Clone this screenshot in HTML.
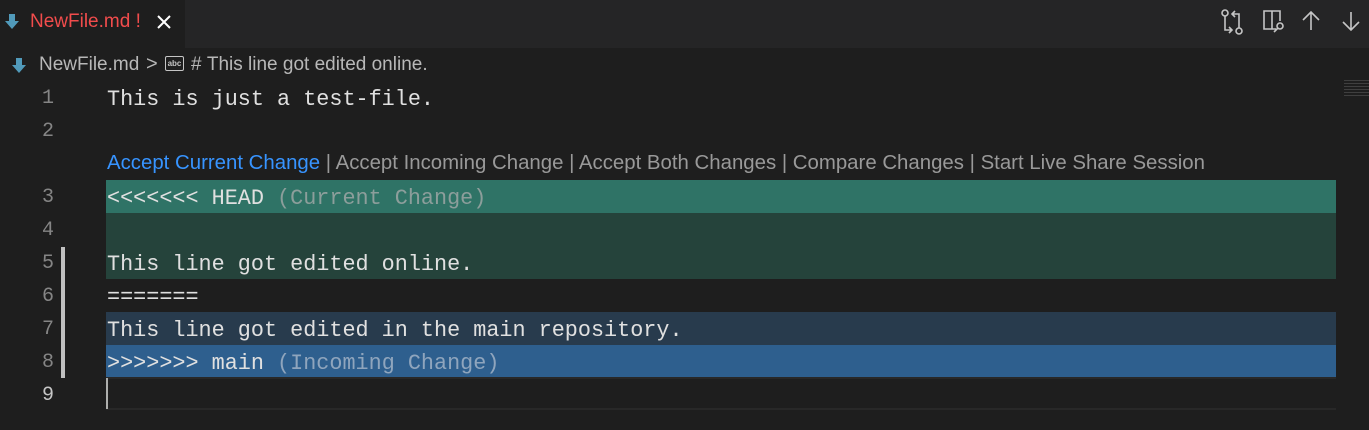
<!DOCTYPE html>
<html><head><style>
body{margin:0;width:1369px;height:430px;background:#1e1e1e;position:relative;overflow:hidden;font-family:"Liberation Sans",sans-serif}
.tabbar{position:absolute;left:0;top:0;width:1369px;height:48px;background:#252526}
.tab{position:absolute;left:0;top:0;width:185px;height:48px;background:#1e1e1e}
.abs{position:absolute}
.ln{position:absolute;left:0;width:54px;text-align:right;font-family:"Liberation Mono",monospace;font-size:20px;color:#858585;height:33px;line-height:33px;margin-top:1px}
.code{position:absolute;left:107px;font-family:"Liberation Mono",monospace;font-size:21.8px;color:#e0e0e0;height:33px;line-height:33px;white-space:pre;margin-top:2px}
.hl{position:absolute;left:106px;width:1230px}
.dim{color:#8c9e9b}
</style></head><body>
<div class="tabbar"><div class="tab"></div></div>
<svg class="abs" style="left:3px;top:12px" width="18" height="20" viewBox="0 0 18 20"><path d="M6 2h6v7h4l-7 8-7-8h4z" fill="#519aba"/></svg>
<div class="abs" style="left:30px;top:11px;font-size:19px;color:#f14c4c">NewFile.md !</div>
<svg class="abs" style="left:155px;top:13px" width="18" height="18" viewBox="0 0 18 18"><path d="M3 3l12 12M15 3L3 15" stroke="#fff" stroke-width="2"/></svg>
<svg class="abs" style="left:1220px;top:8px" width="26" height="28" viewBox="0 0 26 28" fill="none" stroke="#c5c5c5" stroke-width="1.6"><circle cx="5" cy="5" r="3"/><circle cx="19" cy="23" r="3"/><path d="M5 8v14h6M9 19l3 3-3 3M19 20V6h-6M15 3l-3 3 3 3"/></svg>
<svg class="abs" style="left:1260px;top:8px" width="26" height="26" viewBox="0 0 26 26" fill="none" stroke="#c5c5c5" stroke-width="1.6"><path d="M16 21H4V3h16v10M12 3v18"/><circle cx="20" cy="18" r="3"/><path d="M18 20l-4 4"/></svg>
<svg class="abs" style="left:1300px;top:9px" width="22" height="24" viewBox="0 0 22 24" fill="none" stroke="#c5c5c5" stroke-width="1.6"><path d="M11 21V3M3 11l8-8 8 8"/></svg>
<svg class="abs" style="left:1340px;top:9px" width="22" height="24" viewBox="0 0 22 24" fill="none" stroke="#c5c5c5" stroke-width="1.6"><path d="M11 3v18M3 13l8 8 8-8"/></svg>
<svg class="abs" style="left:10px;top:56px" width="18" height="20" viewBox="0 0 18 20"><path d="M6 2h6v7h4l-7 8-7-8h4z" fill="#519aba"/></svg>
<div class="abs" style="left:39px;top:54px;font-size:19px;color:#b8b8b8;white-space:pre">NewFile.md</div>
<div class="abs" style="left:146px;top:53px;font-size:20px;color:#b8b8b8">&gt;</div>
<div class="abs" style="left:165px;top:56px;width:17px;height:13px;border:1.5px solid #c5c5c5;border-radius:2px;font-size:8px;color:#c5c5c5;text-align:center;line-height:13px;font-weight:bold">abc</div>
<div class="abs" style="left:191px;top:54px;font-size:19px;color:#b8b8b8">#&nbsp;This line got edited online.</div>
<div class="abs" style="left:1344px;top:80px;width:25px;height:18px;background:repeating-linear-gradient(#555 0 1px,transparent 1px 3px);opacity:.6"></div>

<div class="hl" style="top:180px;height:33px;background:#2f7366"></div>
<div class="hl" style="top:213px;height:66px;background:#25433b"></div>
<div class="hl" style="top:312px;height:33px;background:#283b4d"></div>
<div class="hl" style="top:345px;height:33px;background:#2e5f8e"></div>
<div class="hl" style="top:377px;height:33px;border-top:2px solid #282828;border-bottom:2px solid #282828;box-sizing:border-box"></div>
<div class="abs" style="left:106px;top:378px;width:2px;height:31px;background:#aeafad"></div>
<div class="abs" style="left:61px;top:247px;width:4px;height:131px;background:#c0c0c0"></div>

<div class="ln" style="top:81px">1</div>
<div class="ln" style="top:114px">2</div>
<div class="ln" style="top:180px">3</div>
<div class="ln" style="top:213px">4</div>
<div class="ln" style="top:246px">5</div>
<div class="ln" style="top:279px">6</div>
<div class="ln" style="top:312px">7</div>
<div class="ln" style="top:345px">8</div>
<div class="ln" style="top:378px;color:#c6c6c6">9</div>

<div class="code" style="top:81px">This is just a test-file.</div>
<div class="abs" style="left:107px;top:152px;font-size:20.4px;color:#999;white-space:pre"><span style="color:#3794ff">Accept Current Change</span> | Accept Incoming Change | Accept Both Changes | Compare Changes | Start Live Share Session</div>
<div class="code" style="top:180px">&lt;&lt;&lt;&lt;&lt;&lt;&lt; HEAD <span class="dim">(Current Change)</span></div>
<div class="code" style="top:246px">This line got edited online.</div>
<div class="code" style="top:279px">=======</div>
<div class="code" style="top:312px">This line got edited in the main repository.</div>
<div class="code" style="top:345px">&gt;&gt;&gt;&gt;&gt;&gt;&gt; main <span style="color:#8fa5bd">(Incoming Change)</span></div>
</body></html>
